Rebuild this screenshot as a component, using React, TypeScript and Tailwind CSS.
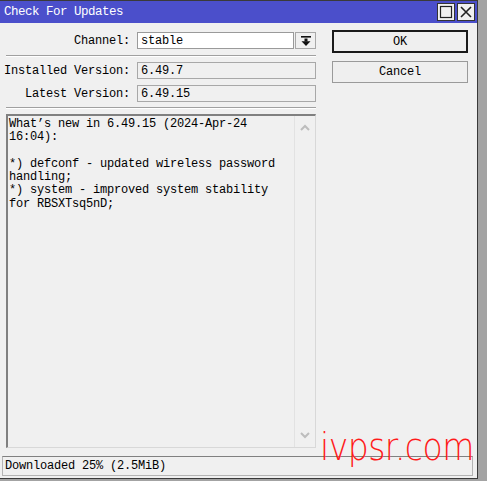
import React from "react";

const mono = "font-['Liberation_Mono',monospace] text-[12px] tracking-[-0.2px]";

function Field({ label, value }: { label: string; value: string }) {
  return (
    <div className="flex items-center h-[17px]">
      <div className="w-[131px] pr-[1px] text-right text-black">{label}</div>
      <div className="ml-[6px] h-[17px] w-[179px] flex items-center pl-[3px] border bg-[#f0f0f0] border-[#a8a8a8]">
        {value}
      </div>
    </div>
  );
}

export default function App() {
  return (
    <div className={`relative w-[487px] h-[481px] bg-[#a3a3a3] overflow-hidden ${mono}`}>
      <div className="w-[478px] h-[479px] bg-[#f0f0f0] border-t border-r border-b border-[#3a3a3a] flex flex-col">
        {/* Title bar */}
        <div className="h-[22px] bg-[#4b4fcb] flex items-center justify-between pl-[4px] pr-[2px]">
          <span className="text-white text-[12.5px] tracking-[-0.5px]">Check For Updates</span>
          <div className="flex gap-[2px]">
            <button className="w-[18px] h-[18px] bg-[#f0f0f0] border border-[#333] flex items-center justify-center">
              <svg width="14" height="14" viewBox="0 0 14 14">
                <rect x="1.5" y="1.5" width="11" height="11" fill="none" stroke="#222" strokeWidth="1.2" />
              </svg>
            </button>
            <button className="w-[18px] h-[18px] bg-[#f0f0f0] border border-[#333] flex items-center justify-center">
              <svg width="14" height="14" viewBox="0 0 14 14">
                <path d="M2 2L12 12M12 2L2 12" stroke="#222" strokeWidth="1.6" />
              </svg>
            </button>
          </div>
        </div>

        {/* Body */}
        <div className="flex flex-1">
          <div className="w-[318px] pt-[9px] flex flex-col">
            <div className="flex items-center h-[17px]">
              <div className="w-[131px] pr-[1px] text-right">Channel:</div>
              <div className="ml-[6px] h-[17px] w-[157px] bg-white border border-[#9a9a9a] flex items-center pl-[3px]">
                stable
              </div>
              <div className="ml-[1px] h-[17px] w-[21px] bg-[#f0f0f0] border border-[#a8a8a8] flex items-center justify-center">
                <svg width="10" height="10" viewBox="0 0 10 10">
                  <rect x="0" y="0" width="10" height="1.6" fill="#111" />
                  <rect x="3.5" y="2.5" width="3" height="3" fill="#111" />
                  <path d="M0.5 5.2H9.5L5 10Z" fill="#111" />
                </svg>
              </div>
            </div>
            <div className="mt-[6px] ml-[6px] w-[310px] border-t border-[#a0a0a0] border-b border-b-white" />
            <div className="mt-[5px] flex flex-col gap-[6px]">
              <Field label="Installed Version:" value="6.49.7" />
              <Field label="Latest Version:" value="6.49.15" />
            </div>
            <div className="mt-[5px] ml-[6px] w-[310px] border-t border-[#a0a0a0] border-b border-b-white" />

            {/* Text area */}
            <div className="mt-[5px] ml-[6px] w-[310px] h-[334px] border-t-2 border-l-2 border-[#808080] border-r border-b border-r-[#d8d8d8] border-b-[#d8d8d8] flex">
              <div className="flex-1 pl-[1px] pt-[2px] leading-[13.3px] whitespace-pre">
                {"What\u2019s new in 6.49.15 (2024-Apr-24\n16:04):\n\n*) defconf - updated wireless password\nhandling;\n*) system - improved system stability\nfor RBSXTsq5nD;"}
              </div>
              <div className="w-[21px] border-l border-[#e2e2e2] flex flex-col justify-between items-center py-[8px]">
                <svg width="10" height="7" viewBox="0 0 10 7">
                  <path d="M1 6L5 2L9 6" fill="none" stroke="#bdbdbd" strokeWidth="2" />
                </svg>
                <svg width="10" height="7" viewBox="0 0 10 7">
                  <path d="M1 1L5 5L9 1" fill="none" stroke="#bdbdbd" strokeWidth="2" />
                </svg>
              </div>
            </div>
          </div>

          <div className="ml-[14px] pt-[7px] flex flex-col gap-[8px]">
            <button className="w-[136px] h-[23px] border-2 border-[#1a1a1a] bg-[#efefef] flex items-center justify-center">
              OK
            </button>
            <button className="w-[136px] h-[22px] border border-[#9a9a9a] bg-[#efefef] flex items-center justify-center">
              Cancel
            </button>
          </div>
        </div>

        {/* Status bar */}
        <div className="mx-[2px] mb-[2px] mt-[7px] w-[471px] h-[20px] border border-[#b4b4b4] border-t-[#808080] flex items-center pl-[2px]">
          Downloaded 25% (2.5MiB)
        </div>
      </div>

      {/* watermark */}
      <div className="absolute left-[320px] top-[428px] text-[#ff1a1a] font-['DejaVu_Sans',sans-serif] font-extralight text-[33px] leading-none tracking-[-0.5px] scale-y-115 origin-top">
        ivpsr.com
      </div>
    </div>
  );
}
